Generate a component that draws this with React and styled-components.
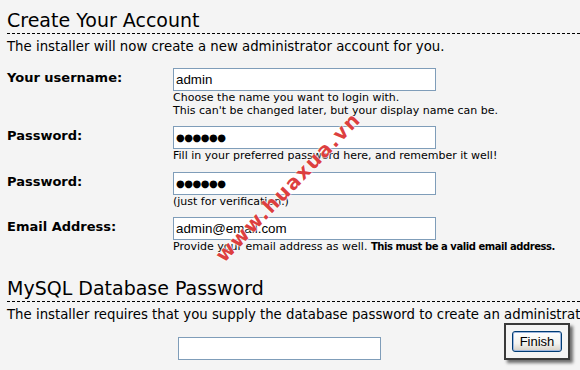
import React from 'react'
import styled, { createGlobalStyle } from 'styled-components'

const GlobalStyle = createGlobalStyle`
  html, body {
    margin: 0;
    padding: 0;
    background: #f4f4f4;
    overflow: hidden;
  }
  body {
    font-family: "DejaVu Sans", Verdana, sans-serif;
    color: #000;
  }
`

const Page = styled.div`
  position: relative;
  width: 580px;
  height: 370px;
  padding-left: 7px;
  box-sizing: border-box;
  overflow: hidden;
`

const Heading = styled.h2`
  margin: ${p => (p.$first ? '0' : '22px')} 0 0 0;
  padding: ${p => (p.$first ? '8px' : '0')} 0 2px 0;
  font-size: 19px;
  line-height: 24px;
  font-weight: normal;
  white-space: nowrap;
  background-image: repeating-linear-gradient(to right, #000 0 3px, transparent 3px 5px);
  background-size: 100% 1px;
  background-position: left bottom;
  background-repeat: no-repeat;
`

const Intro = styled.p`
  margin: 5px 0 0 0;
  font-size: 13.3px;
  line-height: 16px;
  white-space: nowrap;
`

const Form = styled.div`
  display: flex;
  flex-direction: column;
  gap: 9px;
  margin-top: 13px;
`

const Row = styled.div`
  display: flex;
  align-items: flex-start;
`

const Label = styled.label`
  width: 166px;
  flex: none;
  padding-top: 2px;
  font-size: 13px;
  line-height: 16px;
  font-weight: bold;
`

const Field = styled.div`
  display: flex;
  flex-direction: column;
`

const Input = styled.input`
  box-sizing: border-box;
  width: ${p => p.$width || 263}px;
  height: 23px;
  margin: 0;
  padding: 1px 2px;
  border: 1px solid #7f9db9;
  background: #fff;
  font-family: ${p => (p.$masked ? '"DejaVu Sans", sans-serif' : '"Liberation Sans", Arial, sans-serif')};
  font-size: ${p => (p.$masked ? '10px' : '13.33px')};
  letter-spacing: ${p => (p.$masked ? '-0.5px' : '0')};
  color: #000;
  outline: none;
`

const Help = styled.div`
  margin-top: 1px;
  font-size: 11px;
  line-height: 12.5px;
  white-space: nowrap;
`

const Strong = styled.b`
  font-size: 10px;
  letter-spacing: -0.45px;
`

const Bottom = styled.div`
  display: flex;
  align-items: flex-start;
  padding-right: 10px;
`

const DbInput = styled(Input)`
  margin-left: 171px;
  margin-top: 14px;
`

const FinishBox = styled.div`
  margin-left: auto;
  box-sizing: border-box;
  width: 66px;
  height: 37px;
  border: 2px solid #3a3a3a;
  background: #f4f4f4;
  box-shadow: 3px 3px 3px rgba(0, 0, 0, 0.55);
  display: flex;
  align-items: center;
  justify-content: center;
`

const Button = styled.button`
  box-sizing: border-box;
  width: 50px;
  height: 21px;
  padding: 0;
  border: 1px solid #003c74;
  border-radius: 3px;
  background: linear-gradient(to bottom, #ffffff 0%, #f3f3ef 60%, #d6d0c5 100%);
  font-family: "Liberation Sans", Arial, sans-serif;
  font-size: 13px;
  color: #000;
  box-shadow: inset 0 0 0 1px #9eb6dd;
`

const Watermark = styled.span`
  position: absolute;
  left: 288px;
  top: 187px;
  transform: translate(-50%, -50%) rotate(-46deg);
  font-family: "DejaVu Sans", Verdana, sans-serif;
  font-weight: bold;
  font-size: 20px;
  letter-spacing: 1.5px;
  color: rgba(215, 28, 28, 0.85);
  text-shadow: 0 0 2px #fff, 0 0 2px #fff;
  white-space: nowrap;
  pointer-events: none;
`

const DOTS = '\u25CF\u25CF\u25CF\u25CF\u25CF\u25CF'

const rows = [
  { label: 'Your username:', value: 'admin',
    help: ['Choose the name you want to login with.', "This can't be changed later, but your display name can be."] },
  { label: 'Password:', value: DOTS, masked: true,
    help: ['Fill in your preferred password here, and remember it well!'] },
  { label: 'Password:', value: DOTS, masked: true,
    help: ['(just for verification.)'] },
  { label: 'Email Address:', value: 'admin@email.com',
    help: [<>Provide your email address as well. <Strong>This must be a valid email address.</Strong></>] },
]

export default function App() {
  return (
    <>
      <GlobalStyle />
      <Page>
        <Heading $first>Create Your Account</Heading>
        <Intro>The installer will now create a new administrator account for you.</Intro>
        <Form>
          {rows.map((r, i) => (
            <Row key={i}>
              <Label>{r.label}</Label>
              <Field>
                <Input type="text" readOnly defaultValue={r.value} $masked={r.masked} />
                <Help>
                  {r.help.map((h, j) => <div key={j}>{h}</div>)}
                </Help>
              </Field>
            </Row>
          ))}
        </Form>
        <Heading>MySQL Database Password</Heading>
        <Intro>The installer requires that you supply the database password to create an administrator account.</Intro>
        <Bottom>
          <DbInput type="password" $width={203} />
          <FinishBox>
            <Button>Finish</Button>
          </FinishBox>
        </Bottom>
        <Watermark>www.huaxua.vn</Watermark>
      </Page>
    </>
  )
}
